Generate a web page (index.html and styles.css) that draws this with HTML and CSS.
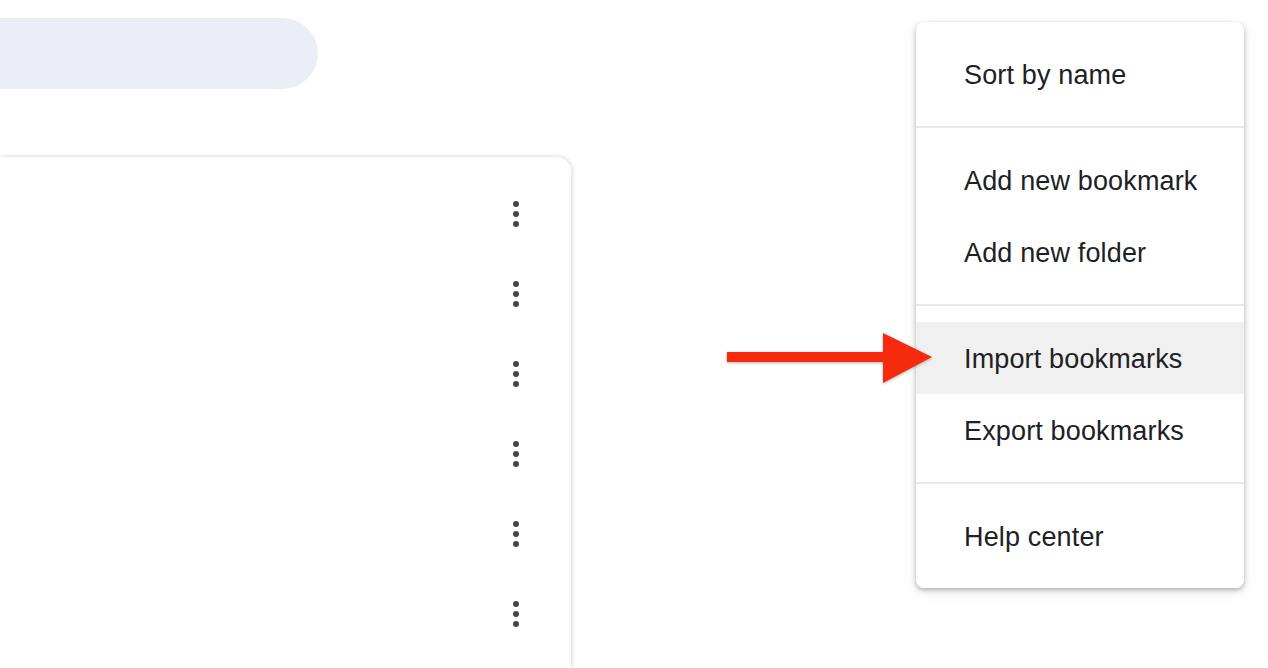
FILE: index.html
```html
<!DOCTYPE html>
<html lang="en">
<head>
<meta charset="utf-8">
<title>Bookmarks</title>
<link rel="stylesheet" href="styles.css">
</head>
<body>
<div class="page">
  <main class="main">
    <div class="search"></div>
    <section class="card">
      <div class="row"><button class="more" aria-label="More"><span></span><span></span><span></span></button></div>
      <div class="row"><button class="more" aria-label="More"><span></span><span></span><span></span></button></div>
      <div class="row"><button class="more" aria-label="More"><span></span><span></span><span></span></button></div>
      <div class="row"><button class="more" aria-label="More"><span></span><span></span><span></span></button></div>
      <div class="row"><button class="more" aria-label="More"><span></span><span></span><span></span></button></div>
      <div class="row"><button class="more" aria-label="More"><span></span><span></span><span></span></button></div>
    </section>
  </main>

  <svg class="arrow" width="210" height="60" viewBox="0 0 210 60" aria-hidden="true">
    <polygon points="2,19 158,19 158,0 207,24 158,50 158,29 2,29" fill="#f62a0c"/>
  </svg>

  <div class="menu" role="menu">
    <div class="group">
      <div class="item">Sort by name</div>
    </div>
    <div class="group">
      <div class="item">Add new bookmark</div>
      <div class="item">Add new folder</div>
    </div>
    <div class="group">
      <div class="item active">Import bookmarks</div>
      <div class="item">Export bookmarks</div>
    </div>
    <div class="group">
      <div class="item">Help center</div>
    </div>
  </div>
</div>
</body>
</html>
```

FILE: styles.css
```css
html, body {
  margin: 0;
  padding: 0;
  background: #ffffff;
  height: 100%;
  overflow: hidden;
}

.page {
  position: relative;
  width: 1268px;
  height: 668px;
  font-family: "Liberation Sans", Arial, sans-serif;
  color: #202124;
}

.main {
  display: flex;
  flex-direction: column;
  width: 571px;
  height: 100%;
}

.search {
  margin-top: 18px;
  width: 318px;
  height: 71px;
  background: #eceef7;
  border-radius: 0 36px 36px 0;
}

.card {
  margin-top: 68px;
  flex: 1;
  background: #ffffff;
  border-radius: 0 14px 0 0;
  box-shadow: 0 0 5px rgba(0, 0, 0, 0.14), 2px 0 4px rgba(0, 0, 0, 0.05);
  padding-top: 17px;
  display: flex;
  flex-direction: column;
}

.row {
  height: 80px;
  display: flex;
  align-items: center;
  justify-content: flex-end;
  padding-right: 31px;
}

.more {
  width: 48px;
  height: 48px;
  border: 0;
  padding: 0;
  background: transparent;
  display: flex;
  flex-direction: column;
  align-items: center;
  justify-content: center;
  gap: 4px;
}

.more span {
  width: 6px;
  height: 6px;
  border-radius: 50%;
  background: #464646;
}

.arrow {
  position: absolute;
  left: 725px;
  top: 333px;
  z-index: 2;
  filter: drop-shadow(0 1px 1.5px rgba(0, 0, 0, 0.3));
}

.menu {
  position: absolute;
  left: 916px;
  top: 22px;
  width: 328px;
  background: #ffffff;
  border-radius: 8px;
  box-shadow: 0 2px 5px rgba(0, 0, 0, 0.28), 0 4px 14px rgba(0, 0, 0, 0.08);
  overflow: hidden;
  z-index: 1;
}

.group {
  padding: 16px 0;
}

.group + .group {
  border-top: 2px solid #e9e9e9;
}

.item {
  height: 72px;
  box-sizing: border-box;
  display: flex;
  align-items: center;
  padding: 2px 0 0 48px;
  font-size: 27px;
  letter-spacing: 0.15px;
  line-height: 1;
}

.item.active {
  background: #f0f0f0;
}
```
